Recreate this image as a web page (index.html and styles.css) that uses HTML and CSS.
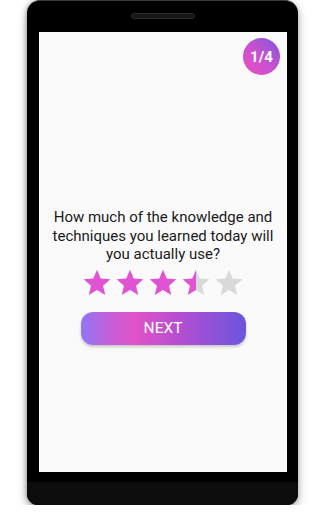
FILE: index.html
```html
<!DOCTYPE html>
<html lang="en">
<head>
    <meta charset="UTF-8">
    <meta name="viewport" content="width=device-width, initial-scale=1.0">
    <title>Survey</title>
    <link rel="stylesheet" href="styles.css">
</head>
<body>
<div class="phone">
    <div class="speaker"></div>

    <div class="screen">
        <div class="top-row">
            <div class="badge">1/4</div>
        </div>

        <div class="question">
            How much of the knowledge and techniques you learned today will you actually use?
        </div>

        <!-- rating: 3.5 of 5 -->
        <div class="stars">
            <svg class="star" viewBox="0 0 24 24"><path class="on" d="M12 17.27L18.18 21l-1.64-7.03L22 9.24l-7.19-.61L12 2 9.19 8.63 2 9.24l5.46 4.73L5.82 21z"/></svg>
            <svg class="star" viewBox="0 0 24 24"><path class="on" d="M12 17.27L18.18 21l-1.64-7.03L22 9.24l-7.19-.61L12 2 9.19 8.63 2 9.24l5.46 4.73L5.82 21z"/></svg>
            <svg class="star" viewBox="0 0 24 24"><path class="on" d="M12 17.27L18.18 21l-1.64-7.03L22 9.24l-7.19-.61L12 2 9.19 8.63 2 9.24l5.46 4.73L5.82 21z"/></svg>
            <svg class="star" viewBox="0 0 24 24">
                <defs>
                    <linearGradient id="half" x1="0" x2="1" y1="0" y2="0">
                        <stop offset="0.5" stop-color="#e053d3"/>
                        <stop offset="0.5" stop-color="#d9d9d9"/>
                    </linearGradient>
                </defs>
                <path fill="url(#half)" d="M12 17.27L18.18 21l-1.64-7.03L22 9.24l-7.19-.61L12 2 9.19 8.63 2 9.24l5.46 4.73L5.82 21z"/>
            </svg>
            <svg class="star" viewBox="0 0 24 24"><path class="off" d="M12 17.27L18.18 21l-1.64-7.03L22 9.24l-7.19-.61L12 2 9.19 8.63 2 9.24l5.46 4.73L5.82 21z"/></svg>
        </div>

        <button class="next-btn">NEXT</button>
    </div>

    <div class="chin"></div>
</div>
</body>
</html>
```

FILE: styles.css
```css
body {
    margin: 0;
    background-color: #fff;
    font-family: Roboto, "Liberation Sans", Arial, sans-serif;
}

.phone {
    width: 271px;
    height: 505px;
    margin-left: 27px;
    background-color: #000;
    border-radius: 13px 13px 11px 11px;
    box-shadow: 0 4px 10px rgba(0, 0, 0, 0.35), -1px 0 4px rgba(0, 0, 0, 0.2);
    border-top: 1px solid #3a3a3a;
    box-sizing: border-box;
    display: flex;
    flex-direction: column;
    align-items: center;
    overflow: hidden;
}

.speaker {
    width: 62px;
    height: 4px;
    margin-top: 12px;
    border-radius: 3px;
    background-color: #151515;
    border: 1px solid #2c2c2c;
}

.screen {
    width: 248px;
    height: 440px;
    margin-top: 13px;
    margin-left: 1px;
    background-color: #fafafa;
    display: flex;
    flex-direction: column;
    align-items: center;
}

.top-row {
    align-self: stretch;
    display: flex;
    justify-content: flex-end;
    padding: 6px 7px 0 0;
}

.badge {
    width: 37px;
    height: 37px;
    border-radius: 50%;
    background: linear-gradient(45deg, #ee4ec4 0%, #c652d0 50%, #7d55da 100%);
    color: #fff;
    font-size: 15px;
    font-weight: bold;
    display: flex;
    align-items: center;
    justify-content: center;
}

.question {
    margin-top: 133px;
    width: 240px;
    text-align: center;
    font-size: 15px;
    line-height: 18.5px;
    color: #1a1a1a;
}

.stars {
    display: flex;
    gap: 1px;
    margin-top: 3px;
}

.star {
    width: 32px;
    height: 32px;
}

.star .on {
    fill: #e053d3;
}

.star .off {
    fill: #d9d9d9;
}

.next-btn {
    margin-top: 13px;
    width: 165px;
    height: 33px;
    border: none;
    border-radius: 12px;
    background: linear-gradient(90deg, #9275f2 0%, #c65fd9 18%, #e152c8 33%, #b04fd2 62%, #6b55dc 100%);
    box-shadow: 0 2px 3px rgba(0, 0, 0, 0.2);
    color: #fff;
    font-family: Roboto, "Liberation Sans", Arial, sans-serif;
    font-size: 15.5px;
    padding: 0;
}

.chin {
    width: 100%;
    height: 23px;
    margin-top: auto;
    background-color: #0c0c0c;
}
```
